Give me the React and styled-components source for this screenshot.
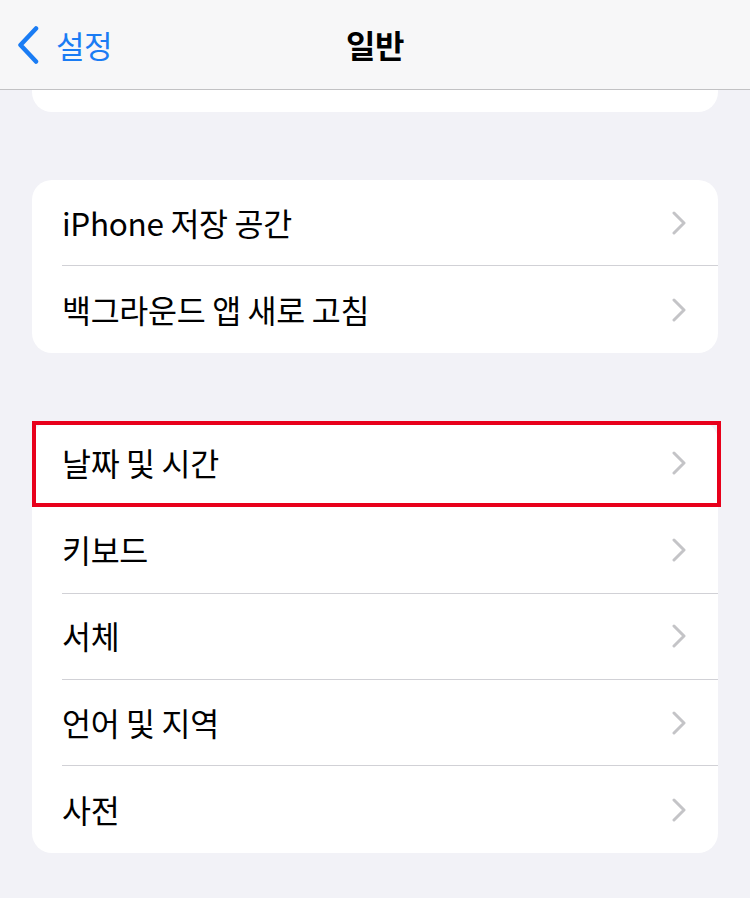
import React from 'react'
import styled, { createGlobalStyle } from 'styled-components'

const Global = createGlobalStyle`
  html, body {
    margin: 0;
    padding: 0;
    background: #f2f2f7;
  }
  body {
    font-family: "Noto Sans CJK KR", "Noto Sans", sans-serif;
    color: #000;
    -webkit-font-smoothing: antialiased;
  }
`

const Page = styled.div`
  width: 750px;
  min-height: 898px;
  background: #f2f2f7;
  overflow: hidden;
`

const NavBar = styled.div`
  position: relative;
  height: 90px;
  box-sizing: border-box;
  background: #f7f7f8;
  border-bottom: 1px solid #c2c2c4;
  display: flex;
  align-items: center;
  justify-content: center;
`

const Back = styled.div`
  position: absolute;
  left: 17px;
  top: 0;
  bottom: 0;
  display: flex;
  align-items: center;
  gap: 17px;
  color: #1a7cf4;
  font-size: 31px;
  letter-spacing: -0.5px;
`

const Title = styled.div`
  font-size: 32px;
  font-weight: 700;
  letter-spacing: -0.5px;
  margin-top: -2px;
`

const Content = styled.div`
  padding: 0 32px;
  display: flex;
  flex-direction: column;
  gap: 68px;
`

const Card = styled.div`
  background: #fff;
  border-radius: ${p => (p.$cut ? '0 0 20px 20px' : '20px')};
  height: ${p => (p.$cut ? '22px' : 'auto')};
  width: 686px;
`

const Row = styled.div`
  position: relative;
  height: 86.4px;
  padding-left: 30px;
  box-sizing: border-box;
  display: flex;
`

const RowInner = styled.div`
  flex: 1;
  display: flex;
  align-items: center;
  justify-content: space-between;
  padding-right: 31px;
  border-bottom: ${p => (p.$last ? 'none' : '1px solid #d1d1d6')};
`

const Label = styled.span`
  font-size: 31.5px;
  letter-spacing: -0.3px;
  margin-top: -2px;
`

const Highlight = styled.div`
  position: absolute;
  top: 0;
  left: 0;
  right: -3px;
  bottom: 0;
  border: 4px solid #e8001b;
  pointer-events: none;
`

const Chevron = () => (
  <svg width="16" height="24" viewBox="0 0 16 24">
    <path d="M3 2 L13 12 L3 22" fill="none" stroke="#c4c4c7" strokeWidth="3" strokeLinecap="round" strokeLinejoin="round" />
  </svg>
)

const BackChevron = () => (
  <svg width="22" height="38" viewBox="0 0 22 38">
    <path d="M19 2.5 L3.5 19 L19 35.5" fill="none" stroke="#1a7cf4" strokeWidth="4.5" strokeLinecap="round" strokeLinejoin="round" />
  </svg>
)

const Group = ({ items, highlight }) => (
  <Card>
    {items.map((t, i) => (
      <Row key={t}>
        <RowInner $last={i === items.length - 1}>
          <Label>{t}</Label>
          <Chevron />
        </RowInner>
        {highlight === i && <Highlight />}
      </Row>
    ))}
  </Card>
)

export default function App() {
  return (
    <Page>
      <Global />
      <NavBar>
        <Back>
          <BackChevron />
          <span>설정</span>
        </Back>
        <Title>일반</Title>
      </NavBar>
      <Content>
        <Card $cut />
        <Group items={['iPhone 저장 공간', '백그라운드 앱 새로 고침']} />
        <Group items={['날짜 및 시간', '키보드', '서체', '언어 및 지역', '사전']} highlight={0} />
      </Content>
    </Page>
  )
}
